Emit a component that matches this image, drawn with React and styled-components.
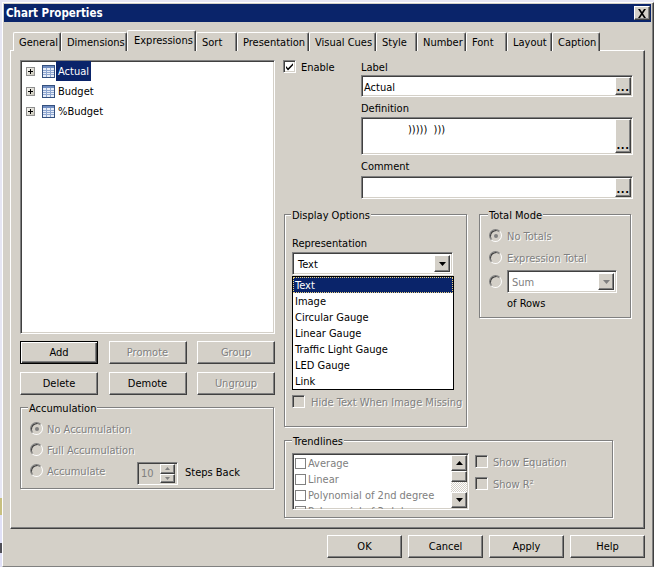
import React from "react";
import styled, { createGlobalStyle, css } from "styled-components";

const TABS = [
  ["General", 48],
  ["Dimensions", 66],
  ["Expressions", 69],
  ["Sort", 41],
  ["Presentation", 72],
  ["Visual Cues", 67],
  ["Style", 41],
  ["Number", 49],
  ["Font", 41],
  ["Layout", 45],
  ["Caption", 48],
];

const REPRESENTATIONS = ["Text", "Image", "Circular Gauge", "Linear Gauge", "Traffic Light Gauge", "LED Gauge", "Link"];
const TRENDS = ["Average", "Linear", "Polynomial of 2nd degree", "Polynomial of 3rd degree"];

const TableIcon = () => (
  <svg width="13" height="13" viewBox="0 0 13 13">
    <rect x="0.5" y="0.5" width="12" height="12" fill="#e8eef8" stroke="#34507f" />
    <rect x="1" y="1" width="11" height="2" fill="#6f8cc0" />
    <path d="M1 5.5h11M1 7.5h11M1 9.5h11M4.5 3v9M8.5 3v9" stroke="#8ea6d0" fill="none" />
  </svg>
);

const Plus = () => (
  <svg width="9" height="9" viewBox="0 0 9 9">
    <path d="M2 4.5h5M4.5 2v5" stroke="#000" fill="none" />
  </svg>
);

const Arrow = ({ up, color = "#000", size = 7 }) => (
  <svg width={size} height={Math.ceil(size / 2)} viewBox="0 0 7 4">
    <polygon points={up ? "3.5,0 7,4 0,4" : "0,0 7,0 3.5,4"} fill={color} />
  </svg>
);

const Tick = () => (
  <svg width="11" height="11" viewBox="0 0 11 11">
    <path d="M2 5l2 2.2L9 2.2v2L4 9.4 2 7z" fill="#000" />
  </svg>
);

const CloseMark = () => (
  <svg width="10" height="9" viewBox="0 0 10 9">
    <path d="M1 0h2l2 3 2-3h2L6 4.5 9 9H7L5 6 3 9H1l3-4.5z" fill="#000" />
  </svg>
);

const raised = css`
  border: 1px solid;
  border-color: #fff #404040 #404040 #fff;
  box-shadow: inset -1px -1px 0 #808080, inset 1px 1px 0 #d4d0c8;
  background: #d4d0c8;
`;

const sunken = css`
  border: 1px solid;
  border-color: #808080 #fff #fff #808080;
  box-shadow: inset 1px 1px 0 #404040, inset -1px -1px 0 #d4d0c8;
`;

const GlobalStyle = createGlobalStyle`
  html, body {
    margin: 0;
    padding: 0;
    overflow: hidden;
  }
  body {
    font-family: "DejaVu Sans Condensed", "Liberation Sans", sans-serif;
    font-stretch: condensed;
    font-size: 11px;
    line-height: 13px;
    color: #000;
  }
`;

const Desktop = styled.div`
  width: 654px;
  height: 567px;
  box-sizing: border-box;
  padding: 2px 0 0 2px;
  background: linear-gradient(
    to bottom,
    #e6e6f4 0 498px,
    #c8c080 498px 515px,
    #e0e0f6 515px 543px,
    #505058 543px 553px,
    #e0e0f6 553px
  );
`;

const Window = styled.div`
  width: 652px;
  height: 565px;
  box-sizing: border-box;
  padding: 1px 2px 0 1px;
  background: #d4d0c8;
  border: 1px solid;
  border-color: #fff #404040 #808080 #fff;
  box-shadow: inset -1px 0 0 #808080;
`;

const TitleBar = styled.div`
  display: flex;
  align-items: center;
  justify-content: space-between;
  height: 18px;
  padding: 0 1px 0 2px;
  background: #0a246a;
  color: #fff;
  font-weight: 700;
  font-size: 11.5px;
`;

const CloseButton = styled.div`
  ${raised}
  display: flex;
  align-items: center;
  justify-content: center;
  box-sizing: border-box;
  width: 16px;
  height: 14px;
`;

const Content = styled.div`
  padding: 8px 6px 0;
`;

const TabRow = styled.div`
  position: relative;
  z-index: 1;
  display: flex;
  align-items: flex-end;
  height: 21px;
  padding-left: 3px;
`;

const Tab = styled.div`
  box-sizing: border-box;
  flex: none;
  width: ${(p) => p.$w}px;
  height: ${(p) => (p.$active ? 21 : 19)}px;
  padding: ${(p) => (p.$active ? "3px 0 0 6px" : "3px 0 0 5px")};
  background: #d4d0c8;
  border-top: 1px solid #fff;
  border-left: 1px solid #fff;
  border-right: 1px solid #404040;
  box-shadow: inset -1px 0 0 #808080;
  border-radius: 2px 2px 0 0;
`;

const Panel = styled.div`
  ${raised}
  box-shadow: inset -1px -1px 0 #808080;
  box-sizing: border-box;
  display: grid;
  grid-template-columns: 255px 1fr;
  column-gap: 8px;
  height: 479px;
  margin-top: -1px;
  padding: 9px 0 0 9px;
`;

const LeftColumn = styled.div`
  display: flex;
  flex-direction: column;
`;

const Tree = styled.div`
  ${sunken}
  box-sizing: border-box;
  height: 274px;
  background: #fff;
`;

const TreeRow = styled.div`
  display: flex;
  align-items: center;
  height: 20px;
  padding-left: 5px;
`;

const Expander = styled.span`
  display: flex;
  box-sizing: border-box;
  width: 9px;
  height: 9px;
  margin-right: 7px;
  background: linear-gradient(135deg, #fff, #c4c0b0);
  outline: 1px solid #8f8f8f;
  outline-offset: -1px;
`;

const TreeLabel = styled.span`
  margin-left: 1px;
  padding: 1px 2px 0;
  line-height: 19px;
  background: ${(p) => (p.$selected ? "#0a246a" : "transparent")};
  color: ${(p) => (p.$selected ? "#fff" : "#000")};
`;

const ButtonGrid = styled.div`
  display: grid;
  grid-template-columns: repeat(3, 78px);
  justify-content: space-between;
  row-gap: 8px;
  margin-top: 7px;
`;

const Button = styled.div`
  ${raised}
  ${(p) =>
    p.$default &&
    css`
      border-color: #000;
      box-shadow: inset 1px 1px 0 #fff, inset -1px -1px 0 #404040, inset -2px -2px 0 #808080;
    `}
  box-sizing: border-box;
  display: flex;
  align-items: center;
  justify-content: center;
  height: 23px;
  ${(p) =>
    p.$disabled &&
    css`
      color: #808080;
      text-shadow: 1px 1px 0 #fff;
    `}
`;

const Group = styled.div`
  position: relative;
  box-sizing: border-box;
  width: ${(p) => p.$w}px;
  height: ${(p) => p.$h}px;
  flex: none;
  border: 1px solid #808080;
  box-shadow: inset 1px 1px 0 #fff, 1px 1px 0 #fff;
  padding: ${(p) => p.$pad};
`;

const Legend = styled.span`
  position: absolute;
  top: -6px;
  left: ${(p) => p.$left || 6}px;
  padding: 0 1px;
  background: #d4d0c8;
`;

const OptionRow = styled.div`
  display: flex;
  align-items: center;
  gap: ${(p) => p.$gap || 4}px;
  height: ${(p) => p.$h || 21}px;
`;

const Radio = styled.span`
  display: flex;
  align-items: center;
  justify-content: center;
  flex: none;
  box-sizing: border-box;
  width: 13px;
  height: 13px;
  border-radius: 50%;
  border: 1px solid;
  border-color: #808080 #fff #fff #808080;
  box-shadow: inset 1px 1px 0 #404040;
  background: #d4d0c8;

  &::after {
    content: "";
    display: ${(p) => (p.$checked ? "block" : "none")};
    width: 4px;
    height: 4px;
    border-radius: 50%;
    background: #808080;
  }
`;

const Muted = styled.span`
  padding-top: 2px;
  color: #808080;
  text-shadow: 1px 1px 0 #fff;
  white-space: nowrap;
`;

const AccumulateLabel = styled(Muted)`
  width: 86px;
`;

const Spin = styled.div`
  ${sunken}
  box-sizing: border-box;
  display: flex;
  align-items: center;
  justify-content: space-between;
  width: 41px;
  height: 23px;
  margin-top: 6px;
  padding: 1px 2px 1px 3px;
  color: #808080;
`;

const SpinButtons = styled.div`
  display: grid;
  grid-template-rows: 1fr 1fr;
  width: 15px;
  height: 19px;
`;

const SpinButton = styled.div`
  ${raised}
  display: flex;
  align-items: center;
  justify-content: center;
  box-sizing: border-box;
`;

const StepsLabel = styled.span`
  margin: 3px 0 0 3px;
`;

const AccumulationWrap = styled.div`
  margin-top: 12px;
`;

const RightColumn = styled.div`
  display: flex;
  flex-direction: column;
`;

const TopBlock = styled.div`
  display: flex;
  height: 139px;
`;

const EnableCell = styled.div`
  display: flex;
  gap: 5px;
  width: 78px;
  flex: none;
  line-height: 15px;
`;

const CheckBox = styled.span`
  ${sunken}
  display: flex;
  align-items: center;
  justify-content: center;
  flex: none;
  box-sizing: border-box;
  width: 13px;
  height: 13px;
  background: ${(p) => (p.$disabled ? "#d4d0c8" : "#fff")};
`;

const FieldStack = styled.div`
  display: flex;
  flex-direction: column;
  width: 272px;
`;

const FieldLabel = styled.label`
  height: ${(p) => p.$h || 15}px;
  margin-top: ${(p) => p.$top || 0}px;
  line-height: 15px;
`;

const Field = styled.div`
  ${sunken}
  box-sizing: border-box;
  display: flex;
  justify-content: space-between;
  height: ${(p) => p.$h}px;
  padding: 1px 1px 1px 2px;
  background: #fff;
`;

const FieldText = styled.span`
  line-height: 22px;
  ${(p) =>
    p.$code &&
    css`
      padding-left: 44px;
      white-space: pre;
    `}
`;

const DotsButton = styled.div`
  ${raised}
  box-sizing: border-box;
  flex: none;
  display: flex;
  align-items: flex-end;
  justify-content: center;
  align-self: stretch;
  width: 16px;
  font-weight: 700;
  line-height: 10px;
  letter-spacing: 0.5px;
  padding-bottom: 1px;
`;

const GroupRow = styled.div`
  display: flex;
  gap: 12px;
  margin: 15px 0 0 1px;
`;

const Caption = styled.div`
  margin-top: 22px;
  height: 15px;
`;

const Combo = styled.div`
  ${sunken}
  position: relative;
  box-sizing: border-box;
  display: flex;
  align-items: center;
  justify-content: space-between;
  width: ${(p) => p.$w}px;
  height: ${(p) => p.$h}px;
  padding: 2px 2px 2px ${(p) => p.$inset}px;
  background: #fff;
  color: ${(p) => (p.$disabled ? "#808080" : "#000")};
`;

const ComboText = styled.span`
  padding-top: 2px;
`;

const ComboButton = styled.div`
  ${raised}
  box-sizing: border-box;
  display: flex;
  align-items: center;
  justify-content: center;
  align-self: stretch;
  width: 16px;
`;

const DropList = styled.div`
  position: absolute;
  z-index: 2;
  top: 23px;
  left: -1px;
  box-sizing: border-box;
  width: 162px;
  height: 114px;
  border: 1px solid #000;
  background: #fff;
`;

const DropItem = styled.div`
  box-sizing: border-box;
  height: 16px;
  padding-left: 2px;
  line-height: 17px;
  ${(p) =>
    p.$selected &&
    css`
      background: #0a246a;
      color: #fff;
      outline: 1px dotted #e8d080;
      outline-offset: -1px;
    `}
`;

const HideRow = styled.div`
  display: flex;
  align-items: center;
  gap: 6px;
  margin-top: 119px;
`;

const TotalRows = styled.div`
  display: flex;
  flex-direction: column;
  gap: 1px;
`;

const OfRows = styled.div`
  margin: 3px 0 0 18px;
`;

const TrendBody = styled.div`
  display: flex;
  gap: 6px;
`;

const TrendList = styled.div`
  ${sunken}
  box-sizing: border-box;
  display: flex;
  justify-content: space-between;
  width: 177px;
  height: 57px;
  padding: 1px;
  background: #fff;
  overflow: hidden;
`;

const TrendItems = styled.div`
  padding-left: 1px;
`;

const TrendItem = styled.div`
  display: flex;
  align-items: center;
  gap: 2px;
  height: 16px;
  color: #808080;
  white-space: nowrap;
`;

const FlatBox = styled.span`
  flex: none;
  box-sizing: border-box;
  width: 11px;
  height: 11px;
  border: 1px solid #808080;
`;

const ScrollBar = styled.div`
  display: flex;
  flex-direction: column;
  flex: none;
  width: 16px;
`;

const ScrollButton = styled.div`
  ${raised}
  box-sizing: border-box;
  display: flex;
  align-items: center;
  justify-content: center;
  height: ${(p) => p.$h}px;
  flex: none;
`;

const ScrollTrack = styled.div`
  flex: 1;
  background: repeating-conic-gradient(#d4d0c8 0 25%, #fff 0 50%) 0 0 / 2px 2px;
`;

const TrendOptions = styled.div`
  display: flex;
  flex-direction: column;
  gap: 7px;
  padding-top: 1px;
`;

const TrendOption = styled.div`
  display: flex;
  align-items: center;
  gap: 5px;
`;

const TrendGroupWrap = styled.div`
  margin: 13px 0 0 1px;
`;

const Footer = styled.div`
  display: flex;
  justify-content: flex-end;
  gap: 6px;
  margin-top: 6px;
`;

const FooterButton = styled(Button)`
  width: 75px;
`;

const App = () => {
  return (
    <Desktop>
      <GlobalStyle />
      <Window>
        <TitleBar>
          <span>Chart Properties</span>
          <CloseButton>
            <CloseMark />
          </CloseButton>
        </TitleBar>

        <Content>
          <TabRow>
            {TABS.map(([name, w]) => (
              <Tab key={name} $w={w} $active={name === "Expressions"}>
                {name}
              </Tab>
            ))}
          </TabRow>

          <Panel>
            <LeftColumn>
              <Tree>
                {["Actual", "Budget", "%Budget"].map((name, i) => (
                  <TreeRow key={name}>
                    <Expander>
                      <Plus />
                    </Expander>
                    <TableIcon />
                    <TreeLabel $selected={i === 0}>{name}</TreeLabel>
                  </TreeRow>
                ))}
              </Tree>

              <ButtonGrid>
                <Button $default>Add</Button>
                <Button $disabled>Promote</Button>
                <Button $disabled>Group</Button>
                <Button>Delete</Button>
                <Button>Demote</Button>
                <Button $disabled>Ungroup</Button>
              </ButtonGrid>

              <AccumulationWrap>
                <Group $w={254} $h={82} $pad="10px 0 0 9px">
                  <Legend $left={7}>Accumulation</Legend>
                  <OptionRow>
                    <Radio $checked />
                    <Muted>No Accumulation</Muted>
                  </OptionRow>
                  <OptionRow>
                    <Radio />
                    <Muted>Full Accumulation</Muted>
                  </OptionRow>
                  <OptionRow>
                    <Radio />
                    <AccumulateLabel>Accumulate</AccumulateLabel>
                    <Spin>
                      10
                      <SpinButtons>
                        <SpinButton>
                          <Arrow up color="#808080" size={5} />
                        </SpinButton>
                        <SpinButton>
                          <Arrow color="#808080" size={5} />
                        </SpinButton>
                      </SpinButtons>
                    </Spin>
                    <StepsLabel>Steps Back</StepsLabel>
                  </OptionRow>
                </Group>
              </AccumulationWrap>
            </LeftColumn>

            <RightColumn>
              <TopBlock>
                <EnableCell>
                  <CheckBox>
                    <Tick />
                  </CheckBox>
                  <span>Enable</span>
                </EnableCell>
                <FieldStack>
                  <FieldLabel>Label</FieldLabel>
                  <Field $h={22}>
                    <FieldText>Actual</FieldText>
                    <DotsButton>...</DotsButton>
                  </Field>
                  <FieldLabel $top={4} $h={16}>
                    Definition
                  </FieldLabel>
                  <Field $h={38}>
                    <FieldText $code>{")))))  )))"}</FieldText>
                    <DotsButton>...</DotsButton>
                  </Field>
                  <FieldLabel $top={4} $h={17}>
                    Comment
                  </FieldLabel>
                  <Field $h={23}>
                    <span />
                    <DotsButton>...</DotsButton>
                  </Field>
                </FieldStack>
              </TopBlock>

              <GroupRow>
                <Group $w={183} $h={213} $pad="0 0 0 7px">
                  <Legend>Display Options</Legend>
                  <Caption>Representation</Caption>
                  <Combo $w={161} $h={23} $inset={5}>
                    <ComboText>Text</ComboText>
                    <ComboButton>
                      <Arrow />
                    </ComboButton>
                    <DropList>
                      {REPRESENTATIONS.map((name, i) => (
                        <DropItem key={name} $selected={i === 0}>
                          {name}
                        </DropItem>
                      ))}
                    </DropList>
                  </Combo>
                  <HideRow>
                    <CheckBox $disabled />
                    <Muted>Hide Text When Image Missing</Muted>
                  </HideRow>
                </Group>

                <Group $w={152} $h={104} $pad="10px 0 0 9px">
                  <Legend $left={8}>Total Mode</Legend>
                  <TotalRows>
                    <OptionRow $gap={5}>
                      <Radio $checked />
                      <Muted>No Totals</Muted>
                    </OptionRow>
                    <OptionRow $gap={5}>
                      <Radio />
                      <Muted>Expression Total</Muted>
                    </OptionRow>
                    <OptionRow $h={25} $gap={5}>
                      <Radio />
                      <Combo $w={110} $h={23} $inset={4} $disabled>
                        <ComboText>Sum</ComboText>
                        <ComboButton>
                          <Arrow color="#808080" />
                        </ComboButton>
                      </Combo>
                    </OptionRow>
                  </TotalRows>
                  <OfRows>of Rows</OfRows>
                </Group>
              </GroupRow>

              <TrendGroupWrap>
                <Group $w={329} $h={78} $pad="12px 0 0 7px">
                  <Legend $left={7}>Trendlines</Legend>
                  <TrendBody>
                    <TrendList>
                      <TrendItems>
                        {TRENDS.map((name) => (
                          <TrendItem key={name}>
                            <FlatBox />
                            {name}
                          </TrendItem>
                        ))}
                      </TrendItems>
                      <ScrollBar>
                        <ScrollButton $h={16}>
                          <Arrow up />
                        </ScrollButton>
                        <ScrollButton $h={11} />
                        <ScrollTrack />
                        <ScrollButton $h={16}>
                          <Arrow />
                        </ScrollButton>
                      </ScrollBar>
                    </TrendList>
                    <TrendOptions>
                      <TrendOption>
                        <CheckBox $disabled />
                        <Muted>Show Equation</Muted>
                      </TrendOption>
                      <TrendOption>
                        <CheckBox $disabled />
                        <Muted>Show R²</Muted>
                      </TrendOption>
                    </TrendOptions>
                  </TrendBody>
                </Group>
              </TrendGroupWrap>
            </RightColumn>
          </Panel>

          <Footer>
            <FooterButton>OK</FooterButton>
            <FooterButton>Cancel</FooterButton>
            <FooterButton>Apply</FooterButton>
            <FooterButton>Help</FooterButton>
          </Footer>
        </Content>
      </Window>
    </Desktop>
  );
};

export default App;
